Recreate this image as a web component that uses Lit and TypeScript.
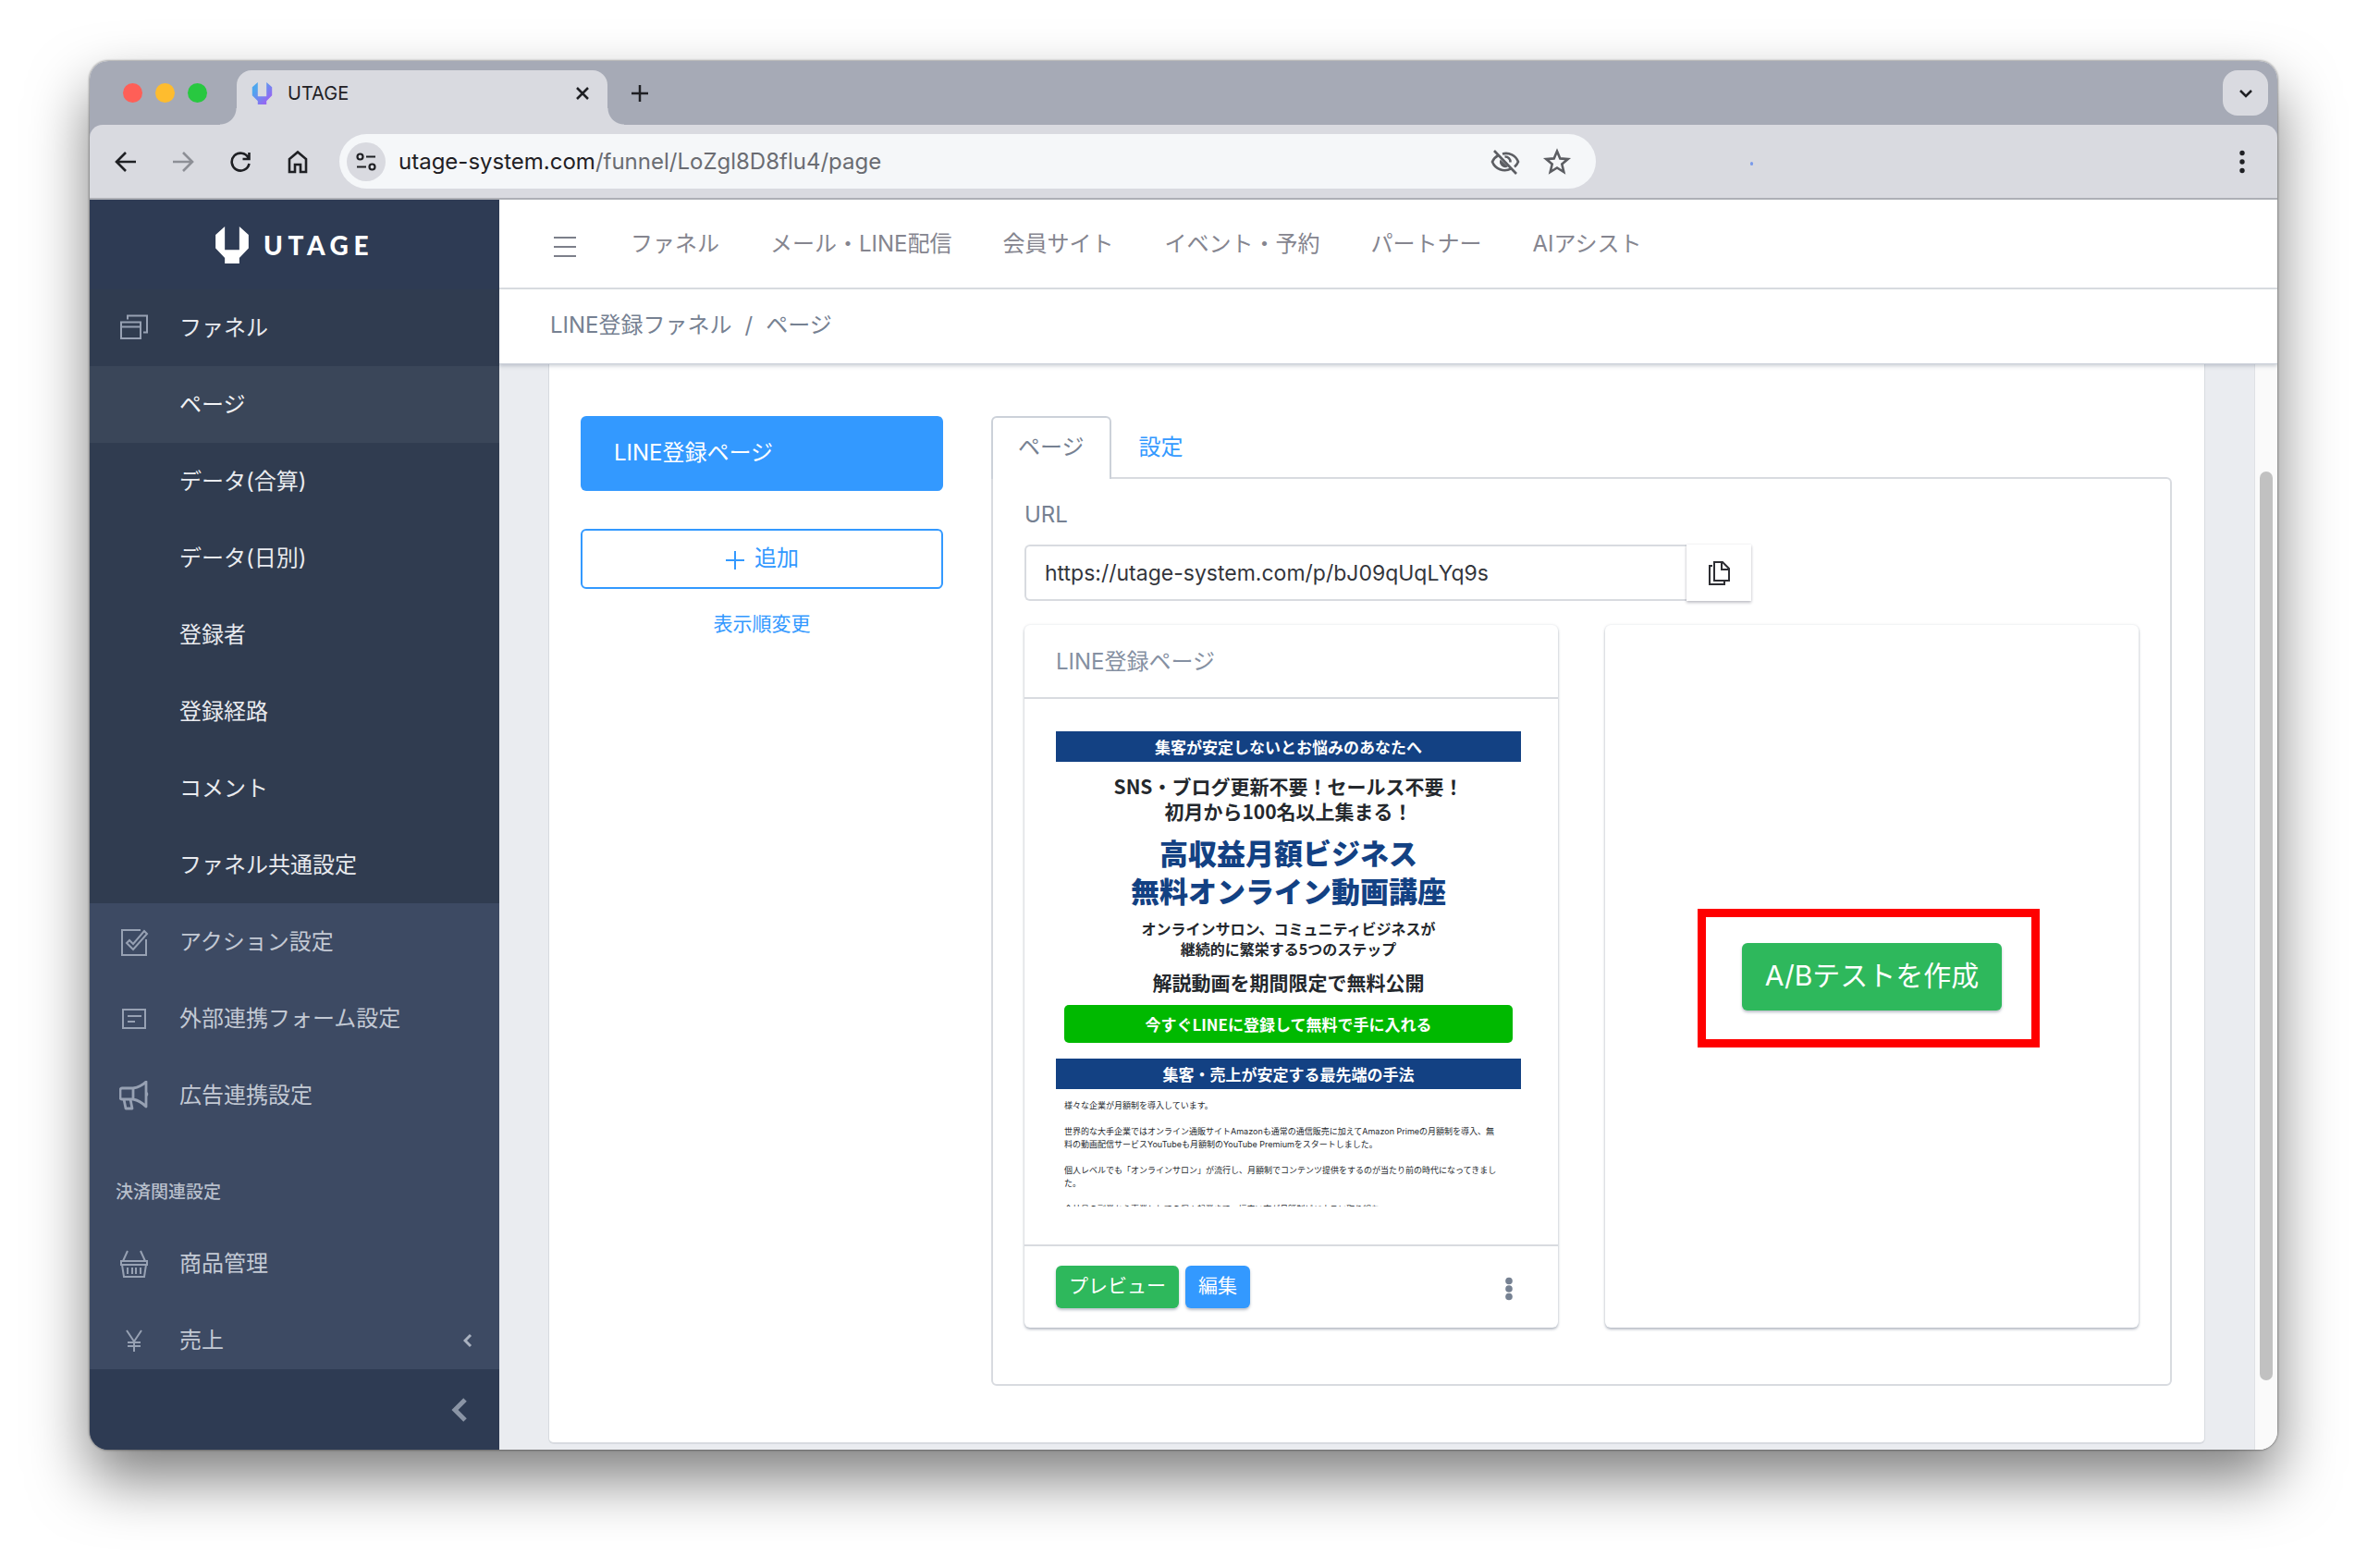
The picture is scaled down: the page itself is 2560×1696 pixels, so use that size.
import { LitElement, html, css, svg, nothing } from "lit";
import { customElement, property } from "lit/decorators.js";

const icons: Record<string, unknown> = {
  windows: svg`<g fill="none" stroke="currentColor" stroke-width="2"><path d="M2 9.500h21v17.500h-21zM2 14.500h21"/><path d="M9 6.500v-4h21v18h-4"/></g>`,
  check: svg`<g fill="none" stroke="currentColor" stroke-width="2"><path d="M23 3H3v27h26V13"/><path d="M8 17l3-3 4 4L27 4l3 3-15 17z"/></g>`,
  form: svg`<g fill="none" stroke="currentColor" stroke-width="2"><path d="M4 6h24v20H4z"/><path d="M9 13h15M9 19h8"/></g>`,
  megaphone: svg`<g fill="none" stroke="currentColor" stroke-width="2.800" stroke-linejoin="round"><path d="M15 8H3a2 2 0 0 0-2 2v8a2 2 0 0 0 2 2h12c6 1 10 4 14 8V1c-4 4-8 6-14 7zM15 8v12"/><path d="M5 20l2 10h7l-2-10"/></g><path d="M29 12c3 0 3 5 0 5z" fill="currentColor"/>`,
  basket: svg`<g fill="none" stroke="currentColor" stroke-width="2"><path d="M9 2L4 13M23 2l5 11"/><path d="M2 13h28v4H2zM3 17l2 13h22l2-13M9 20v7M14 20v7M18 20v7M23 20v7"/></g>`,
  yen: svg`<g fill="none" stroke="currentColor" stroke-width="2"><path d="M8 5l8 12 8-12M16 17v11M9 18h14M9 22h14"/></g>`,
};

@customElement("side-item")
class SideItem extends LitElement {
  @property() label = "";
  @property() icon = "";
  @property() tone = "base";
  @property({ type: Boolean }) more = false;

  static styles = css`
    :host { display: block; flex: none; }
    .row {
      display: flex; align-items: center; height: 83px; padding: 0 29px 0 32px;
      color: #c3c9d4; text-decoration: none; font-size: 24px; line-height: 36px;
    }
    .dark { background: #303c50; color: #e9ebef; }
    .active { background: #3a4659; color: #f2f3f5; }
    .icon { width: 32px; height: 32px; margin-right: 33px; color: #97a1b3; }
    .label { flex: 1; }
    .more { width: 10px; height: 16px; color: #aab2c0; }
  `;

  render() {
    return html`<a class="row ${this.tone}" href="#">
      <svg class="icon" viewBox="0 0 32 32" aria-hidden="true">${icons[this.icon] ?? nothing}</svg>
      <span class="label">${this.label}</span>
      ${this.more
        ? html`<svg class="more" viewBox="0 0 10 16" aria-hidden="true"><path d="M8 2L2 8l6 6" fill="none" stroke="currentColor" stroke-width="3"/></svg>`
        : nothing}
    </a>`;
  }
}

@customElement("side-bar")
class SideBar extends LitElement {
  static styles = css`
    :host { display: flex; flex-direction: column; min-height: 0; background: #3d4a63; }
    .brand {
      flex: none; display: flex; align-items: center; justify-content: center; gap: 16px;
      height: 97px; background: #2e3b54; color: #fff;
    }
    .mark { width: 36px; height: 40px; }
    .word { font: 900 28px/40px Lato, "Liberation Sans", sans-serif; letter-spacing: 0.2em; }
    .list { flex: 1; min-height: 0; overflow: hidden; display: flex; flex-direction: column; }
    .heading { flex: none; padding: 46px 28px 18px; color: #b7bfcb; font-size: 19px; line-height: 35px; font-weight: 500; }
    .fold {
      flex: none; display: flex; justify-content: flex-end; align-items: center; height: 87px;
      padding: 0 34px; border: 0; background: #2e3b53; color: #8a94a5;
    }
    .fold svg { width: 18px; height: 28px; }
  `;

  render() {
    const sub = ["データ(合算)", "データ(日別)", "登録者", "登録経路", "コメント", "ファネル共通設定"];
    return html`
      <div class="brand">
        <svg class="mark" viewBox="0 0 100 112" aria-hidden="true"><path fill="currentColor" d="M0 25L28 0V71H72V0L100 25V66L72 95V112H28V95L0 66Z"/></svg>
        <span class="word">UTAGE</span>
      </div>
      <nav class="list">
        <side-item tone="dark" icon="windows" label="ファネル"></side-item>
        <side-item tone="active" label="ページ"></side-item>
        ${sub.map((s) => html`<side-item tone="dark" label=${s}></side-item>`)}
        <side-item icon="check" label="アクション設定"></side-item>
        <side-item icon="form" label="外部連携フォーム設定"></side-item>
        <side-item icon="megaphone" label="広告連携設定"></side-item>
        <div class="heading">決済関連設定</div>
        <side-item icon="basket" label="商品管理"></side-item>
        <side-item icon="yen" label="売上" more></side-item>
      </nav>
      <button class="fold" aria-label="サイドバーを閉じる">
        <svg viewBox="0 0 18 28" aria-hidden="true"><path d="M15 3L4 14l11 11" fill="none" stroke="currentColor" stroke-width="5"/></svg>
      </button>
    `;
  }
}

@customElement("browser-chrome")
class BrowserChrome extends LitElement {
  static styles = css`
    :host { display: block; flex: none; background: #a6aab6; color: #1f2024; font-family: Inter, "Liberation Sans", sans-serif; }
    button { display: flex; align-items: center; justify-content: center; border: 0; padding: 0; background: none; color: inherit; }
    .strip { display: flex; align-items: flex-end; height: 69px; padding: 0 10px 0 36px; }
    .lights { display: flex; gap: 14px; align-self: center; margin-right: 32px; }
    .light { width: 21px; height: 21px; border-radius: 50%; }
    .red { background: #ff5f57; }
    .yellow { background: #febc2e; }
    .green { background: #28c840; }
    .tab {
      position: relative; display: flex; align-items: center; width: 401px; height: 59px; box-sizing: border-box;
      padding: 0 17px 10px 16px; border-radius: 16px 16px 0 0; background: #d9dae0; font-size: 20px; line-height: 28px;
    }
    .tab::before, .tab::after { content: ""; position: absolute; bottom: 0; width: 18px; height: 18px; }
    .tab::before { right: 100%; background: radial-gradient(circle at 0 0, transparent 17px, #d9dae0 18px); }
    .tab::after { left: 100%; background: radial-gradient(circle at 100% 0, transparent 17px, #d9dae0 18px); }
    .favicon { width: 23px; height: 24px; margin-right: 16px; }
    .title { flex: 1; }
    .tab svg.x { width: 20px; height: 20px; }
    .plus { width: 34px; height: 34px; margin: 0 auto 17px 18px; }
    .plus svg { width: 20px; height: 20px; }
    .list { width: 49px; height: 49px; margin-bottom: 10px; border-radius: 16px; background: #d9dae0; }
    .list svg { width: 16px; height: 16px; }
    .bar {
      display: flex; align-items: center; height: 79px; padding: 0 26px 0 25px; border-radius: 14px 14px 0 0;
      border-bottom: 2px solid #adafb5; background: #d9dae0;
    }
    .tools { display: flex; gap: 34px; margin-right: 31px; }
    .tools svg { width: 28px; height: 28px; }
    .dim { color: #8d8f96; }
    .omni {
      display: flex; align-items: center; width: 1359px; height: 59px; box-sizing: border-box;
      padding: 0 26px 0 8px; border-radius: 30px; background: #f5f7f9;
    }
    .site { width: 42px; height: 42px; margin-right: 14px; border-radius: 50%; background: #d9dae0; }
    .site svg { width: 24px; height: 24px; }
    .url { flex: 1; font-size: 24px; line-height: 32px; color: #6a6c72; }
    .host { color: #1f2024; }
    .marks { display: flex; gap: 24px; color: #5c5e63; }
    .marks svg { width: 32px; height: 32px; }
    .speck { width: 3px; height: 4px; margin: 4px auto 0 167px; border-radius: 2px; background: #7b9bea; }
    .menu svg { width: 24px; height: 28px; }
  `;

  render() {
    return html`
      <div class="strip">
        <div class="lights"><span class="light red"></span><span class="light yellow"></span><span class="light green"></span></div>
        <div class="tab">
          <svg class="favicon" viewBox="0 0 100 112" aria-hidden="true">
            <defs><linearGradient id="fav" x1="0" y1="0" x2="1" y2="1"><stop offset=".25" stop-color="#4fa6ee"/><stop offset=".8" stop-color="#9567f2"/></linearGradient></defs>
            <path fill="url(#fav)" d="M0 25L28 0V71H72V0L100 25V66L72 95V112H28V95L0 66Z"/>
          </svg>
          <span class="title">UTAGE</span>
          <button aria-label="タブを閉じる"><svg class="x" viewBox="0 0 20 20"><path d="M4 4l12 12M16 4L4 16" stroke="currentColor" stroke-width="2.500"/></svg></button>
        </div>
        <button class="plus" aria-label="新しいタブ"><svg viewBox="0 0 20 20"><path d="M10 1v18M1 10h18" stroke="currentColor" stroke-width="2.500"/></svg></button>
        <button class="list" aria-label="タブを検索"><svg viewBox="0 0 16 16"><path d="M2 5l6 6 6-6" fill="none" stroke="currentColor" stroke-width="2.500"/></svg></button>
      </div>
      <div class="bar">
        <div class="tools">
          <button aria-label="戻る"><svg viewBox="0 0 28 28"><path d="M25 14H5M14 4L4 14l10 10" fill="none" stroke="currentColor" stroke-width="2.600"/></svg></button>
          <button class="dim" aria-label="進む"><svg viewBox="0 0 28 28"><path d="M3 14h20M14 4l10 10-10 10" fill="none" stroke="currentColor" stroke-width="2.600"/></svg></button>
          <button aria-label="再読み込み"><svg viewBox="0 0 28 28"><path d="M22.500 9.500A9.500 9.500 0 1 0 23.500 16M23.500 4v7h-7" fill="none" stroke="currentColor" stroke-width="2.600"/></svg></button>
          <button aria-label="ホーム"><svg viewBox="0 0 28 28"><path d="M5 25V11l9-7.500L23 11v14h-6v-8h-6v8z" fill="none" stroke="currentColor" stroke-width="2.600"/></svg></button>
        </div>
        <div class="omni">
          <button class="site" aria-label="サイト情報"><svg viewBox="0 0 24 24"><g fill="none" stroke="currentColor" stroke-width="2.200"><circle cx="5.500" cy="6.500" r="3"/><path d="M12 6.500h10M2 17.500h10"/><circle cx="18.500" cy="17.500" r="3"/></g></svg></button>
          <div class="url"><span class="host">utage-system.com</span>/funnel/LoZgl8D8flu4/page</div>
          <div class="marks">
            <button aria-label="サードパーティ Cookie"><svg viewBox="0 0 32 32"><g fill="none" stroke="currentColor" stroke-width="2.600"><path d="M13 7.400A14 14 0 0 1 30 16a14 14 0 0 1-4 5.500M8.500 9A14 14 0 0 0 2 16a14.500 14.500 0 0 0 20 7.700"/><path d="M4 4l24 25"/><path d="M15.500 10.500a5.500 5.500 0 0 1 6 6"/></g><path d="M10.600 13.500a6 6 0 0 0 8.300 7.800z" fill="currentColor"/></svg></button>
            <button aria-label="ブックマーク"><svg viewBox="0 0 32 32"><path d="M16 4.500l3.300 7.900 8.500.7-6.500 5.500 2 8.400L16 22.500 8.700 27l2-8.400-6.500-5.500 8.500-.7z" fill="none" stroke="currentColor" stroke-width="2.600"/></svg></button>
          </div>
        </div>
        <span class="speck"></span>
        <button class="menu" aria-label="メニュー"><svg viewBox="0 0 24 28"><g fill="currentColor"><circle cx="12" cy="4.500" r="2.700"/><circle cx="12" cy="14" r="2.700"/><circle cx="12" cy="23.500" r="2.700"/></g></svg></button>
      </div>
    `;
  }
}

@customElement("landing-preview")
class LandingPreview extends LitElement {
  static styles = css`
    :host {
      display: block; height: 514px; overflow: hidden; color: #24282d; text-align: center;
      font-family: "Noto Sans CJK JP", sans-serif; font-weight: 700;
    }
    p, h3 { margin: 0; }
    .band { background: #134183; color: #fff; font-size: 17px; line-height: 33px; }
    .lead { margin-top: 13px; font-size: 21px; line-height: 27px; }
    .head { margin-top: 10px; color: #134183; font-size: 31px; line-height: 41px; font-weight: 900; }
    .sub { margin-top: 10px; font-size: 16px; line-height: 22px; }
    .free { margin-top: 12px; font-size: 21px; line-height: 27px; }
    .cta { display: block; margin: 11px 9px 17px; border-radius: 5px; background: #00b900; color: #fff; font-size: 17px; line-height: 41px; text-decoration: none; }
    .copy { margin: 11px 9px 0; text-align: left; font: 400 9px/14px Inter, "Noto Sans CJK JP", sans-serif; white-space: nowrap; }
    .copy p { margin-bottom: 14px; }
  `;

  render() {
    return html`
      <p class="band">集客が安定しないとお悩みのあなたへ</p>
      <p class="lead">SNS・ブログ更新不要！セールス不要！<br>初月から100名以上集まる！</p>
      <h3 class="head">高収益月額ビジネス<br>無料オンライン動画講座</h3>
      <p class="sub">オンラインサロン、コミュニティビジネスが<br>継続的に繁栄する5つのステップ</p>
      <p class="free">解説動画を期間限定で無料公開</p>
      <a class="cta" href="#">今すぐLINEに登録して無料で手に入れる</a>
      <p class="band">集客・売上が安定する最先端の手法</p>
      <div class="copy">
        <p>様々な企業が月額制を導入しています。</p>
        <p>世界的な大手企業ではオンライン通販サイトAmazonも通常の通信販売に加えてAmazon Primeの月額制を導入、無<br>料の動画配信サービスYouTubeも月額制のYouTube Premiumをスタートしました。</p>
        <p>個人レベルでも「オンラインサロン」が流行し、月額制でコンテンツ提供をするのが当たり前の時代になってきまし<br>た。</p>
        <p>会社員の副業から専業としての個人起業まで、幅広い方が月額制ビジネスに取り組む</p>
      </div>
    `;
  }
}

@customElement("app-root")
class AppRoot extends LitElement {
  static styles = css`
    :host {
      display: flex; height: 100vh; box-sizing: border-box; padding: 66px 97px 128px; background: #fff; overflow: hidden;
      font-family: Inter, "Noto Sans CJK JP", sans-serif; font-size: 24px; line-height: 36px; color: #768192;
    }
    a { color: inherit; text-decoration: none; }
    button, input { font: inherit; }
    .window {
      flex: 1; display: flex; flex-direction: column; min-width: 0; overflow: hidden; border-radius: 20px;
      background: #fff; box-shadow: 0 0 2px 1px rgba(0, 0, 0, 0.3), 0 32px 64px rgba(0, 0, 0, 0.5);
    }
    .body { flex: 1; min-height: 0; display: grid; grid-template-columns: 443px minmax(0, 1fr); }
    .main { display: flex; flex-direction: column; min-width: 0; min-height: 0; }
    .top { flex: none; display: flex; align-items: center; gap: 55px; height: 95px; padding: 0 56px; border-bottom: 2px solid #dcdfe3; color: #85858f; }
    .burger { display: flex; border: 0; padding: 7px 4px 0 3px; background: none; color: #7c7f8a; }
    .burger svg { width: 24px; height: 24px; }
    .crumbs { flex: none; z-index: 1; display: flex; gap: 14px; padding: 21px 55px 23px; border-bottom: 1px solid #c9cfd8; box-shadow: 0 2px 4px rgba(60, 75, 100, 0.25); }
    .view { flex: 1; min-height: 0; display: flex; }
    .canvas { flex: 1; display: flex; min-width: 0; padding: 0 53px 6px 53px; background: #eaecf0; border-right: 1px solid #dfe1e5; }
    .board {
      flex: 1; display: grid; grid-template-columns: 392px minmax(0, 1fr); gap: 52px; min-width: 0; padding: 56px 35px 61px 34px;
      border: solid #d8dbe0; border-width: 0 1px 2px; border-radius: 0 0 6px 6px; background: #fff;
    }
    .track { width: 24px; padding: 116px 0 75px; box-sizing: border-box; background: #fafafa; display: flex; justify-content: center; }
    .thumb { width: 14px; border-radius: 7px; background: #c1c1c1; }
    .steps { display: flex; flex-direction: column; align-items: stretch; }
    .step { padding: 22px 36px 23px; border-radius: 6px; background: #3399ff; color: #fff; }
    .add { display: flex; align-items: center; justify-content: center; gap: 10px; height: 65px; margin-top: 41px; padding: 0 0 2px; border: 2px solid #3399ff; border-radius: 6px; background: #fff; color: #3399ff; }
    .add svg { width: 22px; height: 22px; margin-top: 4px; }
    .order { margin: 22px auto 0; color: #3399ff; font-size: 21px; line-height: 32px; }
    .pane { display: flex; flex-direction: column; min-width: 0; }
    .tabs { display: flex; }
    .tabbtn { height: 66px; padding: 0 28px; border: 2px solid transparent; border-bottom: 0; border-radius: 6px 6px 0 0; background: none; color: #3399ff; }
    .on { margin-bottom: -2px; height: 68px; padding: 0 27px 2px; border-color: #ccd1d9; background: #fff; color: #768192; z-index: 1; }
    .panel { flex: 1; display: flex; flex-direction: column; padding: 21px 34px 61px; border: 2px solid #d8dbe0; border-radius: 0 6px 6px 6px; }
    .field { display: flex; width: 786px; max-width: 100%; height: 61px; margin: 14px 0 26px; }
    .input { flex: 1; min-width: 0; box-sizing: border-box; padding: 0 20px; border: 2px solid #d8dbe0; border-right: 0; border-radius: 6px 0 0 6px; background: #fff; color: #33353b; font-size: 23px; }
    .copybtn { width: 70px; border: 0; background: #fff; box-shadow: 0 2px 3px rgba(60, 60, 80, 0.3), 0 0 2px rgba(60, 60, 80, 0.12); color: #2d2e33; display: flex; align-items: center; justify-content: center; }
    .copybtn svg { width: 24px; height: 28px; }
    .cards { flex: 1; display: grid; grid-template-columns: 1fr 1fr; gap: 51px; }
    .card { display: flex; flex-direction: column; border-radius: 6px; background: #fff; box-shadow: 0 2px 3px rgba(60, 75, 100, 0.35), 0 0 3px rgba(60, 75, 100, 0.14); }
    .cardhead { padding: 22px 34px 20px; border-bottom: 2px solid #d8dbe0; color: #8590a2; }
    .cardbody { flex: 1; padding: 35px 40px 0 34px; }
    .cardfoot { display: flex; align-items: center; gap: 7px; padding: 21px 34px; border-top: 2px solid #d8dbe0; }
    .btn { border: 0; border-radius: 6px; background: #2eb85c; color: #fff; box-shadow: 0 2px 3px rgba(60, 75, 100, 0.35); }
    .small { height: 46px; padding: 0 14px 2px; font-size: 21px; }
    .blue { background: #3399ff; }
    .dots { display: flex; margin-left: auto; border: 0; padding: 4px 7px 0; background: none; color: #768192; }
    .dots svg { width: 24px; height: 26px; }
    .test { align-items: center; justify-content: center; }
    .focus { position: relative; }
    .big { height: 73px; padding: 0 25px 2px; font-size: 30px; }
    .frame { position: absolute; inset: -37px -41px -40px -48px; border: 9px solid #ff0000; pointer-events: none; }
  `;

  render() {
    const nav = ["ファネル", "メール・LINE配信", "会員サイト", "イベント・予約", "パートナー", "AIアシスト"];
    return html`
      <div class="window">
        <browser-chrome></browser-chrome>
        <div class="body">
          <side-bar></side-bar>
          <div class="main">
            <header class="top">
              <button class="burger" aria-label="メニュー"><svg viewBox="0 0 24 24"><path d="M0 2h24M0 12h24M0 22h24" stroke="currentColor" stroke-width="2"/></svg></button>
              ${nav.map((n) => html`<a href="#">${n}</a>`)}
            </header>
            <nav class="crumbs"><a href="#">LINE登録ファネル</a><span>/</span><span>ページ</span></nav>
            <div class="view">
              <main class="canvas">
                <div class="board">
                  <div class="steps">
                    <a class="step" href="#">LINE登録ページ</a>
                    <button class="add"><svg viewBox="0 0 22 22" aria-hidden="true"><path d="M11 1v20M1 11h20" stroke="currentColor" stroke-width="2"/></svg>追加</button>
                    <a class="order" href="#">表示順変更</a>
                  </div>
                  <div class="pane">
                    <div class="tabs" role="tablist">
                      <button class="tabbtn on" role="tab" aria-selected="true">ページ</button>
                      <button class="tabbtn" role="tab" aria-selected="false">設定</button>
                    </div>
                    <section class="panel">
                      <label for="url">URL</label>
                      <div class="field">
                        <input class="input" id="url" readonly value="https://utage-system.com/p/bJ09qUqLYq9s">
                        <button class="copybtn" aria-label="コピー"><svg viewBox="0 0 24 28"><g fill="none" stroke="currentColor" stroke-width="2"><path d="M7 2h9l7 7v13H7zM15 2v8h8"/><path d="M5 6H2v20h16v-3"/></g></svg></button>
                      </div>
                      <div class="cards">
                        <article class="card">
                          <div class="cardhead">LINE登録ページ</div>
                          <div class="cardbody"><landing-preview></landing-preview></div>
                          <div class="cardfoot">
                            <button class="btn small">プレビュー</button>
                            <button class="btn small blue">編集</button>
                            <button class="dots" aria-label="その他"><svg viewBox="0 0 24 26"><g fill="currentColor"><circle cx="12" cy="4.500" r="3.800"/><circle cx="12" cy="13" r="3.800"/><circle cx="12" cy="21.500" r="3.800"/></g></svg></button>
                          </div>
                        </article>
                        <article class="card test">
                          <div class="focus"><button class="btn big">A/Bテストを作成</button><div class="frame"></div></div>
                        </article>
                      </div>
                    </section>
                  </div>
                </div>
              </main>
              <div class="track"><div class="thumb"></div></div>
            </div>
          </div>
        </div>
      </div>
    `;
  }
}
